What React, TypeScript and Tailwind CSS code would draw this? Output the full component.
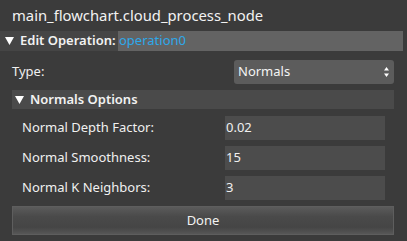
import React from "react";

function Tri() {
  return (
    <svg width="9" height="8" viewBox="0 0 9 8" className="shrink-0">
      <polygon points="0,0 9,0 4.5,8" fill="#ffffff" />
    </svg>
  );
}

function Field({ label, value }: { label: string; value: string }) {
  return (
    <div className="flex h-[24px] items-center">
      <div className="w-[225px] pl-[22px] text-[13px] text-[#f0f0f0]">{label}</div>
      <div className="flex h-[24px] w-[160px] items-center bg-[#4c4c4c] pl-[1px] text-[13px] text-[#f0f0f0]">
        {value}
      </div>
    </div>
  );
}

export default function App() {
  return (
    <div
      className="flex h-[241px] w-[407px] flex-col bg-[#3b3b3b] text-white"
      style={{ fontFamily: '"Noto Sans", "Open Sans", sans-serif' }}
    >
      <div className="flex h-[31px] items-center pl-[12px] text-[14.8px] text-[#f2f2f2]">
        main_flowchart.cloud_process_node
      </div>
      <div className="flex h-[20px] w-[403px] items-center bg-[#454545]">
        <div className="flex w-[118px] items-center gap-[6px] pl-[5px]">
          <Tri />
          <span className="text-[13px] font-semibold text-[#f2f2f2]">Edit Operation:</span>
        </div>
        <div className="flex h-[20px] flex-1 items-center bg-[#636363] pl-[1px] text-[13px] text-[#2ea8ea]">
          operation0
        </div>
      </div>
      <div className="mt-[9px] flex h-[24px] items-center">
        <div className="w-[234px] pl-[12px] text-[13px] text-[#f0f0f0]">Type:</div>
        <div className="flex h-[24px] w-[160px] items-center justify-between rounded-[3px] bg-[#5c5c5c] pl-[4px] pr-[5px] text-[13px] text-[#f4f4f4]">
          <span>Normals</span>
          <svg width="5" height="10" viewBox="0 0 5 10">
            <polygon points="2.5,0 5,3.5 0,3.5" fill="#ffffff" />
            <polygon points="0,6.5 5,6.5 2.5,10" fill="#ffffff" />
          </svg>
        </div>
      </div>
      <div className="ml-[12px] mt-[6px] flex h-[19px] w-[382px] items-center gap-[6px] bg-[#4a4a4a] pl-[3px]">
        <Tri />
        <span className="text-[13px] font-semibold text-[#f2f2f2]">Normals Options</span>
      </div>
      <div className="mt-[7px] flex flex-col gap-[6px]">
        <Field label="Normal Depth Factor:" value="0.02" />
        <Field label="Normal Smoothness:" value="15" />
        <Field label="Normal K Neighbors:" value="3" />
      </div>
      <div className="ml-[12px] mt-[6px] flex h-[29px] w-[382px] items-center justify-center border border-[#5e5e5e] bg-[linear-gradient(to_bottom,#5b5b5b_0%,#4a4a4a_35%,#454545_75%,#575757_100%)] text-[13px] text-[#f2f2f2]">
        Done
      </div>
    </div>
  );
}
